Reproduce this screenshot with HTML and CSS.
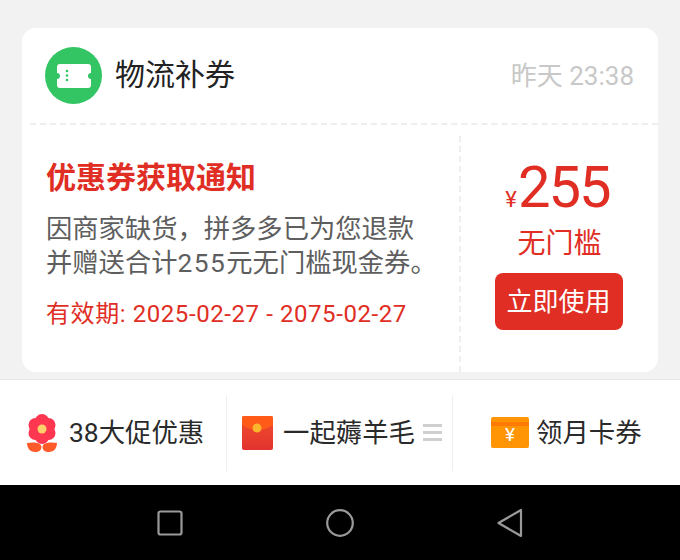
FILE: index.html
```html
<!DOCTYPE html>
<html lang="zh-CN">
<head>
    <meta charset="UTF-8">
    <meta name="viewport" content="width=device-width, initial-scale=1.0">
    <title>物流补券</title>
    <link rel="stylesheet" href="styles.css">
</head>
<body>
    <main class="chat">
        <section class="card">
            <header class="card-head">
                <div class="avatar">
                    <svg width="34" height="24" viewBox="0 0 34 24">
                        <path fill="#fff" d="M3 0H31a3 3 0 0 1 3 3V9a3 3 0 0 0 0 6v6a3 3 0 0 1-3 3H3a3 3 0 0 1-3-3V15a3 3 0 0 0 0-6V3a3 3 0 0 1 3-3Z"/>
                        <circle cx="10" cy="7" r="1.300" fill="#33c463"/>
                        <circle cx="10" cy="11.500" r="1.300" fill="#33c463"/>
                        <circle cx="10" cy="16" r="1.300" fill="#33c463"/>
                    </svg>
                </div>
                <h2 class="sender">物流补券</h2>
                <span class="stamp">昨天 23:38</span>
            </header>
            <div class="card-body">
                <div class="notice">
                    <h1 class="notice-title">优惠券获取通知</h1>
                    <p class="notice-text">因商家缺货&#xFF0C;拼多多已为您退款<br>并赠送合计<span class="num">255</span>元无门槛现金券。</p>
                    <p class="notice-date">有效期: 2025-02-27 - 2075-02-27</p>
                </div>
                <div class="coupon">
                    <div class="amount"><span class="yen">¥</span>255</div>
                    <div class="coupon-rule">无门槛</div>
                    <button class="use-btn"><span class="use-label">立即使用</span></button>
                </div>
            </div>
        </section>
    </main>

    <nav class="tabs">
        <div class="tab tab-first">
            <svg width="34" height="38" viewBox="0 0 34 38">
                <g fill="#ff3750">
                    <circle cx="17" cy="7" r="7"/>
                    <circle cx="23.500" cy="11" r="7"/>
                    <circle cx="23.500" cy="19" r="7"/>
                    <circle cx="17" cy="23" r="7"/>
                    <circle cx="10.500" cy="19" r="7"/>
                    <circle cx="10.500" cy="11" r="7"/>
                    <circle cx="17" cy="15" r="8"/>
                </g>
                <circle cx="17" cy="15" r="4.500" fill="#ffcf6b"/>
                <path fill="#ff5a2a" d="M2 29C8 28 16 28 16.500 33C16.500 36 14 38 10 38C5 38 2 34 2 29ZM32 29C26 28 18 28 17.500 33C17.500 36 20 38 24 38C29 38 32 34 32 29Z"/>
            </svg>
            <span class="tab-label">38大促优惠</span>
        </div>
        <div class="tab tab-mid">
            <svg width="31" height="34" viewBox="0 0 31 34">
                <defs>
                    <linearGradient id="packet" x1="0" y1="0" x2="0" y2="1">
                        <stop offset="0" stop-color="#f0502a"/>
                        <stop offset="1" stop-color="#e23230"/>
                    </linearGradient>
                </defs>
                <rect width="31" height="34" rx="2" fill="url(#packet)"/>
                <path fill="#ff5a18" d="M2 0H29a2 2 0 0 1 2 2V9Q15.500 19 0 9V2a2 2 0 0 1 2-2Z"/>
                <circle cx="15" cy="12" r="4.500" fill="#fdb52e"/>
            </svg>
            <span class="tab-label">一起薅羊毛</span>
            <i class="menu-lines"></i>
        </div>
        <div class="tab tab-last">
            <svg width="38" height="31" viewBox="0 0 38 31">
                <rect width="38" height="31" rx="2" fill="#ff9505"/>
                <rect y="5" width="38" height="4" fill="#ff7a05"/>
            </svg>
            <span class="yen-mark">¥</span>
            <span class="tab-label">领月卡券</span>
        </div>
    </nav>

    <footer class="sys-bar">
        <svg width="26" height="26" viewBox="0 0 26 26"><rect x="1.500" y="1.500" width="23" height="23" rx="2" fill="none" stroke="#9a9a9a" stroke-width="2.200"/></svg>
        <svg width="28" height="28" viewBox="0 0 28 28"><circle cx="14" cy="14" r="12.800" fill="none" stroke="#9a9a9a" stroke-width="2.200"/></svg>
        <svg width="26" height="30" viewBox="0 0 26 30"><path d="M24 2V28L1.500 15Z" fill="none" stroke="#9a9a9a" stroke-width="2.200" stroke-linejoin="round"/></svg>
    </footer>
</body>
</html>
```

FILE: styles.css
```css
* {
    margin: 0;
    padding: 0;
    box-sizing: border-box;
}

body {
    width: 680px;
    height: 560px;
    overflow: hidden;
    font-family: Roboto, "Noto Sans CJK SC", sans-serif;
    background-color: #f2f2f2;
    display: flex;
    flex-direction: column;
}

.chat {
    height: 379px;
    padding: 28px 22px 7px;
}

.card {
    height: 344px;
    background-color: #fff;
    border-radius: 14px;
}

.card-head {
    height: 97px;
    margin-left: 8px;
    padding: 19px 24px 0 15px;
    display: flex;
    align-items: flex-start;
    border-bottom: 2px dashed #eee;
}

.avatar {
    width: 57px;
    height: 57px;
    border-radius: 50%;
    background-color: #33c463;
    display: flex;
    align-items: center;
    justify-content: center;
    flex-shrink: 0;
}

.sender {
    margin-left: 13px;
    font-size: 30px;
    font-weight: 400;
    line-height: 56px;
    color: #222;
}

.stamp {
    margin-left: auto;
    font-size: 26px;
    line-height: 58px;
    color: #c8c8c8;
}

.card-body {
    height: 247px;
    padding-top: 11px;
    display: flex;
}

.notice {
    width: 437px;
    padding: 25px 0 0 24px;
}

.notice-title {
    font-size: 30px;
    line-height: 34px;
    font-weight: 700;
    color: #e02e24;
}

.notice-text {
    margin-top: 17px;
    font-size: 26.300px;
    line-height: 34px;
    color: #5e5e5e;
}

.num {
    letter-spacing: 1.500px;
}

.notice-date {
    margin-top: 17px;
    font-size: 24px;
    letter-spacing: 0.580px;
    line-height: 34px;
    color: #e02e24;
}

.coupon {
    flex: 1;
    border-left: 2px dashed #eee;
    display: flex;
    flex-direction: column;
    align-items: center;
    color: #e02e24;
}

.amount {
    margin-top: 16px;
    margin-right: 4px;
    font-size: 58px;
    letter-spacing: -2px;
    line-height: 70px;
}

.yen {
    font-size: 22px;
    letter-spacing: 0;
    margin-right: 1px;
}

.coupon-rule {
    font-size: 28px;
    line-height: 40px;
    margin-top: -11px;
}

.use-btn {
    margin-top: 9px;
    margin-right: 2px;
    width: 128px;
    height: 57px;
    border: none;
    border-radius: 8px;
    background-color: #e02e24;
    color: #fff;
    font-family: inherit;
    font-size: 26px;
}

.use-label {
    display: block;
    margin-top: -4px;
}

.tabs {
    height: 106px;
    background-color: #fff;
    border-top: 1px solid #e6e6e6;
    display: flex;
    align-items: center;
}

.tab {
    height: 76px;
    display: flex;
    align-items: center;
    position: relative;
    font-size: 26.400px;
    color: #2a2a2a;
}

.tab-label {
    margin-top: -4px;
}

.tab-first {
    width: 227px;
    padding-left: 25px;
    gap: 10px;
    border-right: 1px solid #efefef;
}

.tab-mid {
    width: 226px;
    padding-left: 15px;
    gap: 10px;
    border-right: 1px solid #efefef;
}

.tab-last {
    flex: 1;
    padding-left: 38px;
    gap: 7px;
}

.menu-lines {
    width: 19px;
    height: 17px;
    margin-left: -2px;
    border-top: 3px solid #cfcfcf;
    border-bottom: 3px solid #cfcfcf;
    position: relative;
}

.menu-lines::before {
    content: "";
    position: absolute;
    left: 0;
    right: 0;
    top: 4px;
    height: 3px;
    background-color: #cfcfcf;
}

/* sits on top of the card icon */
.yen-mark {
    position: absolute;
    left: 52px;
    top: 26px;
    font-size: 19px;
    line-height: 28px;
    color: #fff;
}

.sys-bar {
    flex: 1;
    background-color: #000;
    display: flex;
    align-items: center;
    padding: 0 157px;
    justify-content: space-between;
}
```
